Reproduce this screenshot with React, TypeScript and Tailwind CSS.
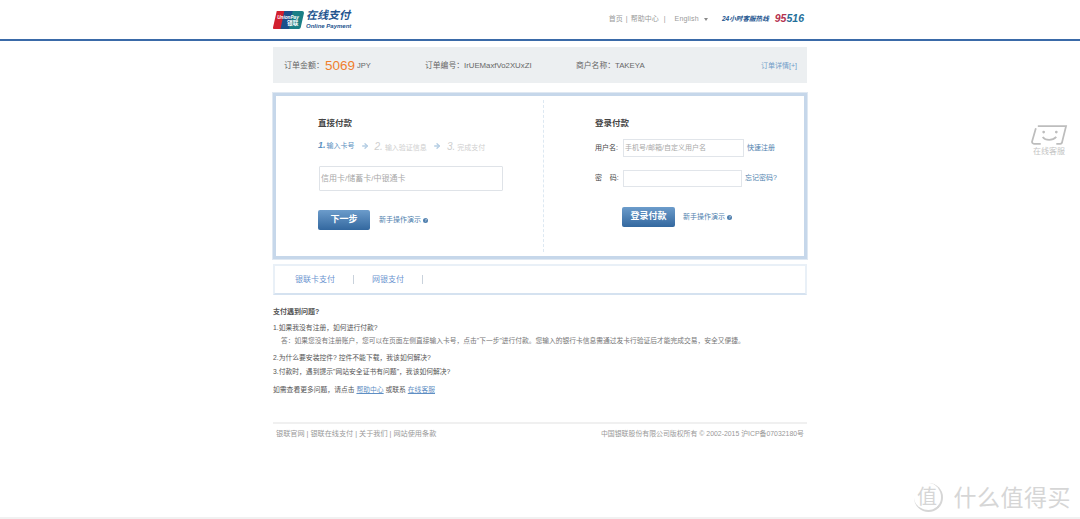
import { ArrowRight, ChevronRight } from "lucide-react";

const cjk = "font-['Liberation_Sans','Noto_Sans_CJK_SC',sans-serif]";

function Logo() {
  return (
    <div className="flex items-center">
      <svg width="31" height="20" viewBox="0 0 33 21">
        <path d="M4 1h11l-4 19H1a1 1 0 0 1-1-1.500z" fill="#d2202f" />
        <path d="M12 1h11l-4 19H8z" fill="#1a4f8b" />
        <path d="M21 1h10a2 2 0 0 1 2 2l-3.500 15.500a2 2 0 0 1-2 1.500H17z" fill="#1a7f86" />
        <text x="16" y="9" fontSize="5" fontStyle="italic" fontWeight="700" fill="#fff" textAnchor="middle" fontFamily="Liberation Sans">UnionPay</text>
        <text x="21" y="16" fontSize="6" fontWeight="700" fill="#fff" textAnchor="middle" fontFamily="Noto Sans CJK SC">银联</text>
      </svg>
      <div className="ml-[2px] flex flex-col text-[#23558f] italic">
        <span className="text-[11px] leading-[13px] font-bold">在线支付</span>
        <span className="text-[6px] leading-[8px] font-bold">Online Payment</span>
      </div>
    </div>
  );
}

function Header() {
  return (
    <div className="h-[41px] border-b-2 border-[#3a6aa8]">
      <div className="mx-auto flex h-[39px] w-[534px] items-center justify-between">
        <Logo />
        <div className="flex items-center text-[7px] text-[#9a9a9a] pr-[3px] -mt-[1px]">
          <span>首页</span>
          <span className="mx-[3px]">|</span>
          <span>帮助中心</span>
          <span className="ml-[5px]">|</span>
          <span className="ml-[9px] tracking-[0.2px]">English</span>
          <span className="ml-[5px] h-0 w-0 border-x-[2.500px] border-t-[3px] border-x-transparent border-t-[#8a8a8a]" />
          <span className="ml-[14px] text-[6.600px] font-bold italic text-[#23558f]">24小时客服热线</span>
          <span className="ml-[6px] text-[10.500px] font-bold italic">
            <span className="text-[#b5324f]">95</span>
            <span className="text-[#1f6f9a]">516</span>
          </span>
        </div>
      </div>
    </div>
  );
}

function OrderBar() {
  return (
    <div className="mt-[6px] flex h-[36px] items-center bg-[#eceff1] pt-[2px] text-[7.800px] text-[#666]">
      <div className="ml-[11px] flex w-[141px] items-center">
        <span className="text-[8px]">订单金额：</span>
        <span className="ml-[1px] text-[13.500px] text-[#f07f2e]">5069</span>
        <span className="ml-[2px] text-[7.500px]">JPY</span>
      </div>
      <div className="w-[151px]">订单编号：IrUEMaxfVo2XUxZI</div>
      <div>商户名称：TAKEYA</div>
      <div className="ml-auto mr-[10px] text-[7px] text-[#6f9cc8]">订单详情[+]</div>
    </div>
  );
}

function HelpLink({ className }: { className?: string }) {
  return (
    <span className={`flex items-center text-[7px] text-[#4f7fae] ${className ?? ""}`}>
      新手操作演示
      <span className="ml-[2px] flex h-[5px] w-[5px] items-center justify-center rounded-full bg-[#4f7fae]">
        <ChevronRight size={4} color="#fff" strokeWidth={4} />
      </span>
    </span>
  );
}

function Step({ n, label, active }: { n: string; label: string; active?: boolean }) {
  return (
    <span className={`flex items-baseline ${active ? "text-[#5b8fc0]" : "text-[#cfcfcf]"}`}>
      <span className={`${active ? "text-[9px] font-bold" : "text-[10px]"} italic`}>{n}.</span>
      <span className={`${active ? "ml-[1px]" : "ml-[2px]"} text-[7px]`}>{label}</span>
    </span>
  );
}

function StepArrow() {
  return <ArrowRight size={8} strokeWidth={4} color="#b5cee4" className="mx-[6px]" />;
}

function DirectPay() {
  return (
    <div className="w-[267px] pl-[42px] pt-[21px]">
      <div className="text-[8.500px] leading-[12px] font-bold text-[#444]">直接付款</div>
      <div className="mt-[11px] flex h-[12px] items-center">
        <Step n="1" label="输入卡号" active />
        <StepArrow />
        <Step n="2" label="输入验证信息" />
        <StepArrow />
        <Step n="3" label="完成支付" />
      </div>
      <div className="mt-[14px] ml-[1px] flex h-[25px] w-[184px] items-center rounded-[1px] border border-[#dfe3e8] pl-[1px] text-[8px] text-[#a8a8a8]">
        信用卡/储蓄卡/中银通卡
      </div>
      <div className="mt-[19px] flex items-center">
        <div className="flex h-[20px] w-[52px] items-center justify-center rounded-[2px] bg-gradient-to-b from-[#6c9ccb] to-[#33689f] text-[9px] font-bold text-white">
          下一步
        </div>
        <HelpLink className="ml-[9px]" />
      </div>
    </div>
  );
}

function LoginPay() {
  return (
    <div className="flex-1 border-l border-dashed border-[#dde8f2] my-[4px] pl-[51px] pt-[17px]">
      <div className="text-[8.500px] leading-[12px] font-bold text-[#444]">登录付款</div>
      <div className="mt-[10px] flex h-[18px] items-center text-[7px] text-[#444]">
        <span className="w-[28px]">用户名:</span>
        <div className="flex h-[18px] w-[121px] items-center border border-[#e1e5ea] pl-[1px] text-[7px] text-[#a8a8a8]">
          手机号/邮箱/自定义用户名
        </div>
        <span className="ml-[3px] text-[#4f7fae]">快速注册</span>
      </div>
      <div className="mt-[13px] flex h-[17px] items-center text-[7px] text-[#444]">
        <span className="w-[28px] whitespace-pre">密    码:</span>
        <div className="h-[17px] w-[119px] border border-[#e1e5ea]" />
        <span className="ml-[3px] text-[#4f7fae]">忘记密码?</span>
      </div>
      <div className="mt-[20px] ml-[27px] flex items-center">
        <div className="flex h-[20px] w-[53px] items-center justify-center rounded-[2px] bg-gradient-to-b from-[#6c9ccb] to-[#33689f] text-[9px] font-bold text-white">
          登录付款
        </div>
        <HelpLink className="ml-[8px]" />
      </div>
    </div>
  );
}

function Tabs() {
  return (
    <div className="mt-[5px] flex h-[31px] items-center border-2 border-[#e9f0f7] border-b-[#d5e2f0] pl-[20px] text-[8px] text-[#6a93cf]">
      <span>银联卡支付</span>
      <span className="mx-[18px] h-[9px] w-px bg-[#c9d2dc]" />
      <span>网银支付</span>
      <span className="ml-[18px] h-[9px] w-px bg-[#c9d2dc]" />
    </div>
  );
}

function Faq() {
  return (
    <div className="mt-[11px] text-[6.800px] leading-[11px] text-[#555]">
      <div className="text-[7px] font-bold">支付遇到问题?</div>
      <div className="mt-[5px]">1.如果我没有注册，如何进行付款?</div>
      <div className="mt-[2px] ml-[8px] text-[6.750px] text-[#777]">
        答：如果您没有注册账户，您可以在页面左侧直接输入卡号，点击"下一步"进行付款。您输入的银行卡信息需通过发卡行验证后才能完成交易，安全又便捷。
      </div>
      <div className="mt-[6px]">2.为什么要安装控件? 控件不能下载，我该如何解决?</div>
      <div className="mt-[3px]">3.付款时，遇到提示"网站安全证书有问题"，我该如何解决?</div>
      <div className="mt-[7px]">
        如需查看更多问题，请点击 <span className="text-[#5f8fc4] underline">帮助中心</span> 或联系{" "}
        <span className="text-[#5f8fc4] underline">在线客服</span>
      </div>
    </div>
  );
}

function Footer() {
  return (
    <div className="mt-[27px] flex h-[21px] items-center justify-between border-t-2 border-[#f0f0f0] px-[3px] pt-[2px] text-[7.150px] text-[#999]">
      <span>银联官网 | 银联在线支付 | 关于我们 | 网站使用条款</span>
      <span className="text-[6.900px]">中国银联股份有限公司版权所有 © 2002-2015 沪ICP备07032180号</span>
    </div>
  );
}

function ServiceWidget() {
  return (
    <div className="absolute right-[9px] top-[125px] flex w-[44px] flex-col items-center">
      <svg width="37" height="20" viewBox="0 0 38 20" fill="none" stroke="#bdbdbd" strokeWidth="1.800">
        <path d="M7 1h29l-4 16a2 2 0 0 1-2 2h-4M10 19H3a2 2 0 0 1-2-2L5 3" />
        <circle cx="13" cy="7" r="1.400" fill="#bdbdbd" stroke="none" />
        <circle cx="26" cy="7" r="1.400" fill="#bdbdbd" stroke="none" />
        <path d="M12 12c3 4 10 4 14 0" />
      </svg>
      <span className="mt-[2px] text-[8px] leading-[10px] text-[#c4c4c4]">在线客服</span>
    </div>
  );
}

function Watermark() {
  return (
    <div className="absolute right-[9px] bottom-[7px] flex items-center text-[#d6d6d6]">
      <span className="flex h-[29px] w-[29px] items-center justify-center rounded-full border-r-2 border-b-2 border-[#d6d6d6] text-[20px]">
        值
      </span>
      <span className="ml-[11px] text-[23px] leading-[26px] tracking-[0.5px]">什么值得买</span>
    </div>
  );
}

export default function App() {
  return (
    <div className={`relative h-[519px] w-[1080px] overflow-hidden bg-white ${cjk}`}>
      <Header />
      <div className="mx-auto w-[534px]">
        <OrderBar />
        {/* pay panel */}
        <div className="mt-[10px] flex h-[166px] border-[3px] border-[#c6d7ea] outline outline-[1px] outline-[#dfe8f2]">
          <DirectPay />
          <LoginPay />
        </div>
        <Tabs />
        <Faq />
        <Footer />
      </div>
      <ServiceWidget />
      <Watermark />
      <div className="absolute inset-x-0 bottom-0 h-[2px] bg-[#f1f1f1]" />
    </div>
  );
}
